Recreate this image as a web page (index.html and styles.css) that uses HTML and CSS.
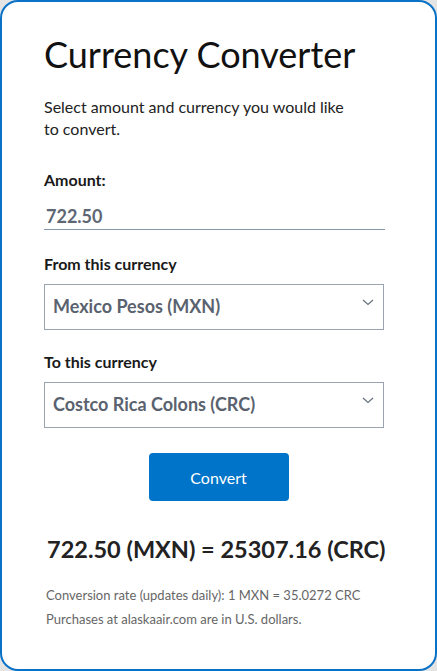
FILE: index.html
```html
<!DOCTYPE html>
<html lang="en">
<head>
<meta charset="utf-8">
<title>Currency Converter</title>
<link rel="stylesheet" href="styles.css">
</head>
<body>
<main class="card">
  <h1 class="title">Currency Converter</h1>
  <p class="intro">Select amount and currency you would like to convert.</p>

  <label class="label label-amount" for="amount">Amount:</label>
  <div class="amount" id="amount">722.50</div>

  <div class="label label-from">From this currency</div>
  <div class="select">
    <span>Mexico Pesos (MXN)</span>
    <svg class="chev" width="12" height="7" viewBox="0 0 12 7"><path d="M1 1l5 4.5L11 1" fill="none" stroke="#6b7480" stroke-width="1.3"/></svg>
  </div>

  <div class="label label-to">To this currency</div>
  <div class="select">
    <span>Costco Rica Colons (CRC)</span>
    <svg class="chev" width="12" height="7" viewBox="0 0 12 7"><path d="M1 1l5 4.5L11 1" fill="none" stroke="#6b7480" stroke-width="1.3"/></svg>
  </div>

  <div class="actions">
    <button class="btn" type="button">Convert</button>
  </div>

  <div class="result">722.50 (MXN) = 25307.16 (CRC)</div>

  <div class="notes">
    <p>Conversion rate (updates daily): 1 MXN = 35.0272 CRC</p>
    <p>Purchases at alaskaair.com are in U.S. dollars.</p>
  </div>
</main>
</body>
</html>
```

FILE: styles.css
```css
* { box-sizing: border-box; }
html, body { margin: 0; padding: 0; }
body {
  background: #e4e4e4;
  font-family: Lato, "Open Sans", sans-serif;
  color: #151515;
}
.card {
  width: 437px;
  height: 671px;
  background: #fff;
  border: 2px solid #0a72c6;
  border-radius: 18px;
  padding: 31px 42px 0 42px;
}
.title {
  margin: 0;
  font-size: 36px;
  font-weight: 400;
  line-height: 43px;
  color: #111;
}
.intro {
  margin: 20px 0 0 0;
  width: 305px;
  font-size: 16px;
  line-height: 22px;
  color: #222;
}
.label {
  display: block;
  font-size: 16px;
  font-weight: 700;
  line-height: 20px;
  color: #1a1a1a;
}
.label-amount { margin-top: 30px; }
.label-from { margin-top: 24px; }
.label-to { margin-top: 22px; }
.amount {
  margin-top: 15px;
  width: 341px;
  padding: 0 0 2px 2px;
  font-size: 18px;
  font-weight: 700;
  line-height: 22px;
  color: #5e6875;
  border-bottom: 1px solid #8797ab;
}
.select {
  margin-top: 10px;
  width: 340px;
  height: 46px;
  border: 1px solid #9aa4b0;
  display: flex;
  align-items: center;
  justify-content: space-between;
  padding: 0 9px 3px 8px;
  font-size: 18px;
  font-weight: 700;
  color: #59626e;
}
.chev { align-self: flex-start; margin-top: 14px; }
.actions {
  display: flex;
  justify-content: center;
  margin-top: 25px;
}
.btn {
  width: 140px;
  height: 48px;
  border: 0;
  border-radius: 4px;
  background: #0074c8;
  color: #fff;
  font-family: Lato, sans-serif;
  font-size: 16px;
  font-weight: 400;
}
.result {
  margin-top: 34px;
  padding-left: 3px;
  font-size: 23.5px;
  font-weight: 700;
  line-height: 28px;
  color: #222;
}
.notes {
  margin-top: 20px;
  padding-left: 2px;
  font-size: 13px;
  line-height: 24px;
  color: #666;
}
.notes p { margin: 0; }
```
